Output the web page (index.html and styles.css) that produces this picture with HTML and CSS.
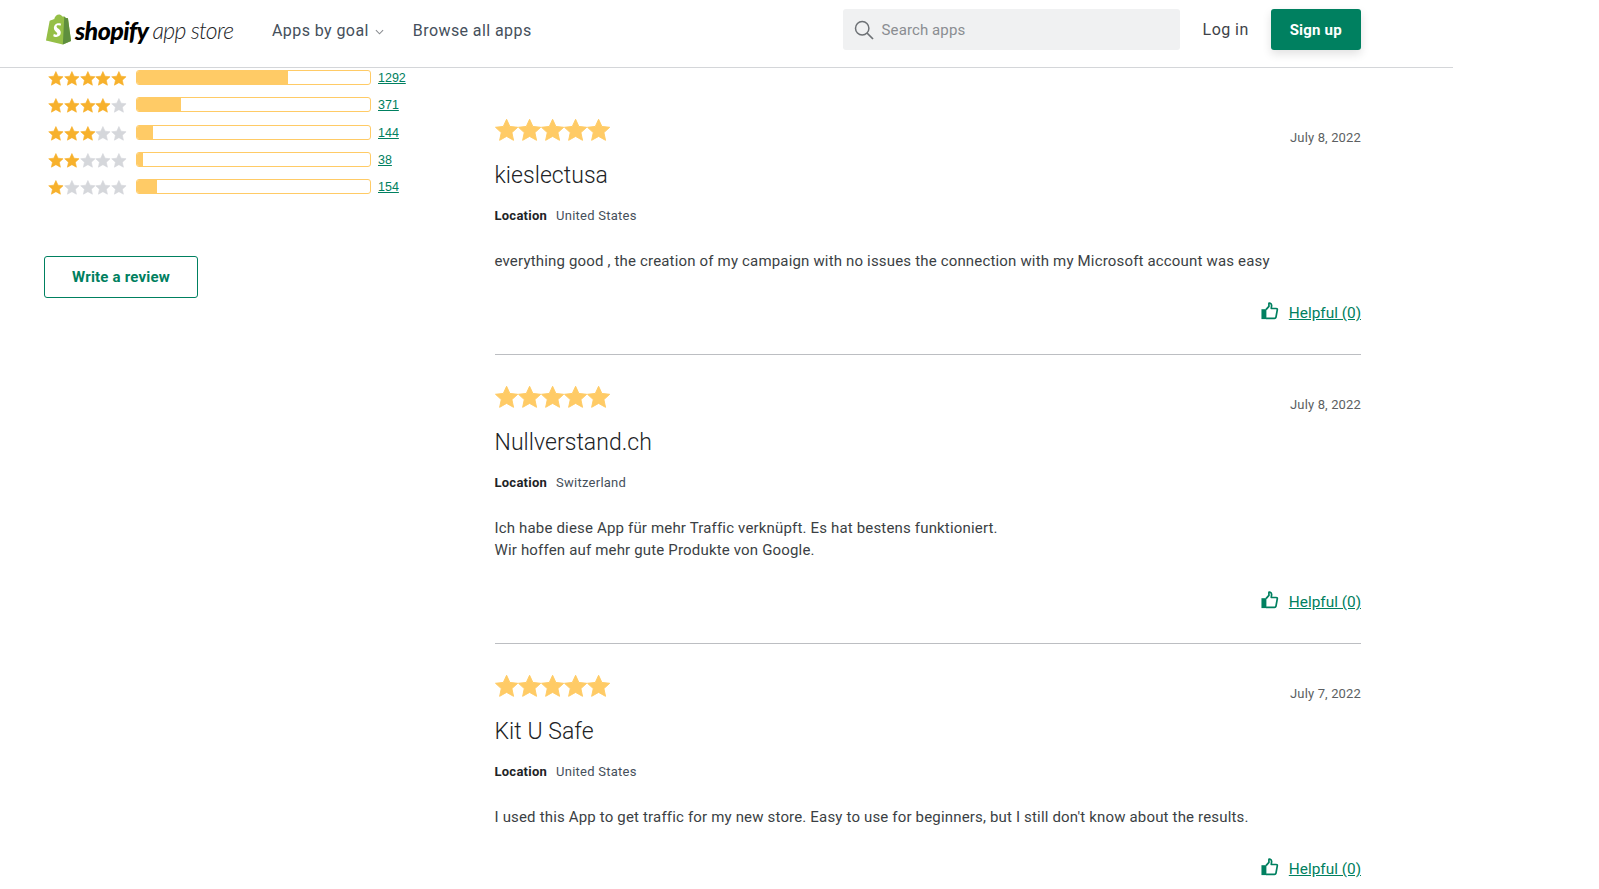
FILE: index.html
```html
<!DOCTYPE html>
<html lang="en">
<head>
<meta charset="utf-8">
<title>Shopify App Store reviews</title>
<link rel="stylesheet" href="styles.css">
</head>
<body>
<svg class="defs" width="0" height="0" aria-hidden="true">
  <symbol id="star" viewBox="0 0 24 24"><path d="M12 .9l3.4 7.4 8.1.9-6 5.5 1.700 8-7.200-4.100-7.200 4.100 1.700-8-6-5.500 8.100-.9z" stroke="currentColor" stroke-width="1" stroke-linejoin="round" fill="currentColor"/></symbol>
  <symbol id="thumb" viewBox="0 0 20 20"><path d="M.5 8h5.500v11H.5z" fill="#008060"/><path d="M5.600 8.500l3.200-3.600V1.600c0-.6 2.800-.6 3 2.100l-.4 3.500h5.400c1 0 1.500.7 1.300 1.600l-1.500 8.200c-.2.800-.7 1.200-1.500 1.200H5.600" fill="none" stroke="#008060" stroke-width="1.900" stroke-linejoin="round"/></symbol>
</svg>
<div class="page">
  <header class="topbar">
    <a class="logo" href="#">
      <svg class="bag" viewBox="0 0 28 32" width="27" height="31"><path d="M1 27.500L4.800 7.200c.2-.7 4-1.600 4.700-1.900C10.300 2.500 12.300.3 15 .5c1.100.1 2.300 1.200 3 2l2 .1 1.600 1.500 2.200.2L27 28l-8.500 3.500z" fill="#95bf47"/><path d="M20 2.600l1.600 1.500 2.200.2L27 28l-8.500 3.500z" fill="#5e8e3e"/><path d="M16 12.200s-1.100-.5-2.300-.5c-2.400 0-1.900 2-.5 3 1.600 1.200 3.300 2.300 3.200 4.700-.1 2.700-2.200 4.300-4.600 4.300-1.600 0-3.300-.8-3.300-.8l.7-2.400s1.200 1 2.400 1c1.200 0 1.500-1.200.7-2.100-1.200-1.400-3.100-2.300-3.100-4.900 0-2.900 2.200-5 5.200-5 1.500 0 2.400.5 2.400.5z" fill="#fff"/></svg>
      <span class="logo-word">shopify</span>
      <span class="logo-sub">app store</span>
    </a>
    <nav class="nav">
      <a class="nav-link" href="#">Apps by goal <svg class="chev" viewBox="0 0 10 6" width="9" height="6"><path d="M1 1l4 4 4-4" fill="none" stroke="#8a8d91" stroke-width="1.200"/></svg></a>
      <a class="nav-link" href="#">Browse all apps</a>
    </nav>
    <div class="search">
      <svg viewBox="0 0 20 20" width="20" height="20"><circle cx="8.200" cy="8.200" r="6.700" fill="none" stroke="#6d7175" stroke-width="1.500"/><path d="M13 13l6 6" stroke="#6d7175" stroke-width="1.700"/></svg>
      <span>Search apps</span>
    </div>
    <a class="login" href="#">Log in</a>
    <a class="signup" href="#">Sign up</a>
  </header>

  <main class="content">
    <aside class="side">
      <div class="rate"><span class="stars small"><svg class="on"><use href="#star"/></svg><svg class="on"><use href="#star"/></svg><svg class="on"><use href="#star"/></svg><svg class="on"><use href="#star"/></svg><svg class="on"><use href="#star"/></svg></span><span class="bar"><span class="fill" style="width:65%"></span></span><a href="#">1292</a></div>
      <div class="rate"><span class="stars small"><svg class="on"><use href="#star"/></svg><svg class="on"><use href="#star"/></svg><svg class="on"><use href="#star"/></svg><svg class="on"><use href="#star"/></svg><svg class="off"><use href="#star"/></svg></span><span class="bar"><span class="fill" style="width:19%"></span></span><a href="#">371</a></div>
      <div class="rate"><span class="stars small"><svg class="on"><use href="#star"/></svg><svg class="on"><use href="#star"/></svg><svg class="on"><use href="#star"/></svg><svg class="off"><use href="#star"/></svg><svg class="off"><use href="#star"/></svg></span><span class="bar"><span class="fill" style="width:7%"></span></span><a href="#">144</a></div>
      <div class="rate"><span class="stars small"><svg class="on"><use href="#star"/></svg><svg class="on"><use href="#star"/></svg><svg class="off"><use href="#star"/></svg><svg class="off"><use href="#star"/></svg><svg class="off"><use href="#star"/></svg></span><span class="bar"><span class="fill" style="width:2.500%"></span></span><a href="#">38</a></div>
      <div class="rate"><span class="stars small"><svg class="on"><use href="#star"/></svg><svg class="off"><use href="#star"/></svg><svg class="off"><use href="#star"/></svg><svg class="off"><use href="#star"/></svg><svg class="off"><use href="#star"/></svg></span><span class="bar"><span class="fill" style="width:8.500%"></span></span><a href="#">154</a></div>
      <a class="write" href="#">Write a review</a>
    </aside>

    <section class="reviews">
      <article class="review">
        <div class="review-top">
          <span class="stars big"><svg><use href="#star"/></svg><svg><use href="#star"/></svg><svg><use href="#star"/></svg><svg><use href="#star"/></svg><svg><use href="#star"/></svg></span>
          <time>July 8, 2022</time>
        </div>
        <h3>kieslectusa</h3>
        <p class="loc"><b>Location</b><span>United States</span></p>
        <p class="text">everything good , the creation of my campaign with no issues the connection with my Microsoft account was easy</p>
        <div class="helpful"><svg width="18" height="18"><use href="#thumb"/></svg><a href="#">Helpful (0)</a></div>
      </article>
      <article class="review">
        <div class="review-top">
          <span class="stars big"><svg><use href="#star"/></svg><svg><use href="#star"/></svg><svg><use href="#star"/></svg><svg><use href="#star"/></svg><svg><use href="#star"/></svg></span>
          <time>July 8, 2022</time>
        </div>
        <h3>Nullverstand.ch</h3>
        <p class="loc"><b>Location</b><span>Switzerland</span></p>
        <p class="text">Ich habe diese App für mehr Traffic verknüpft. Es hat bestens funktioniert.<br>Wir hoffen auf mehr gute Produkte von Google.</p>
        <div class="helpful"><svg width="18" height="18"><use href="#thumb"/></svg><a href="#">Helpful (0)</a></div>
      </article>
      <article class="review">
        <div class="review-top">
          <span class="stars big"><svg><use href="#star"/></svg><svg><use href="#star"/></svg><svg><use href="#star"/></svg><svg><use href="#star"/></svg><svg><use href="#star"/></svg></span>
          <time>July 7, 2022</time>
        </div>
        <h3>Kit U Safe</h3>
        <p class="loc"><b>Location</b><span>United States</span></p>
        <p class="text">I used this App to get traffic for my new store. Easy to use for beginners, but I still don't know about the results.</p>
        <div class="helpful"><svg width="18" height="18"><use href="#thumb"/></svg><a href="#">Helpful (0)</a></div>
      </article>
    </section>
  </main>
</div>
</body>
</html>
```

FILE: styles.css
```css
* { box-sizing: border-box; }
html, body { margin: 0; height: 100%; overflow: hidden; background: #fff; }
body { font-family: Roboto, "Liberation Sans", sans-serif; color: #212326; }
a { color: inherit; text-decoration: none; }
.defs { position: absolute; }
.page { width: 1453px; }

.topbar { height: 68px; border-bottom: 1px solid #d4d6d9; display: flex; align-items: center; padding: 0 92px 8px 45px; }
.logo { display: flex; align-items: center; width: 227px; color: #000; }
.bag { flex: none; margin-right: 3px; }
.logo-word { font: italic 900 25px Lato, sans-serif; letter-spacing: -.6px; }
.logo-sub { font: italic 300 23px Lato, sans-serif; margin-left: 4px; letter-spacing: -.7px; color: #212326; }
.nav { display: flex; gap: 29px; margin-top: 2px; font-size: 16px; color: #454f5b; letter-spacing: .42px; }
.nav-link { display: flex; align-items: center; gap: 6px; }
.chev { margin-top: 2px; }
.search { margin-left: 311px; width: 337px; height: 41px; border-radius: 3px; background: #f0f1f2; display: flex; align-items: center; gap: 8px; padding: 1px 0 0 11px; color: #8a8d91; font-size: 15px; letter-spacing: .1px; }
.login { margin-left: 23px; font-size: 16px; color: #3e4248; letter-spacing: .45px; }
.signup { margin-left: 22px; width: 90px; height: 41px; border-radius: 3px; background: #008060; color: #fff; font-size: 15px; font-weight: 700; letter-spacing: .2px; display: flex; align-items: center; justify-content: center; box-shadow: 0 4px 10px rgba(0,0,0,.12); }

.content { display: flex; align-items: flex-start; padding: 2px 92px 0 44px; }
.side { width: 450.500px; flex: none; display: flex; flex-direction: column; align-items: flex-start; }
.rate { height: 27.250px; display: flex; align-items: flex-start; font-size: 12.500px; }
.rate a { margin-left: 7px; margin-top: 1px; color: #008060; text-decoration: underline; font-family: "Liberation Sans", sans-serif; line-height: 14px; }
.stars { display: flex; }
.stars.small { width: 87px; padding: 1px 0 0 4px; color: #f7b12c; gap: 0; }
.stars.small svg { width: 15.800px; height: 15px; flex: none; }
.stars.small .off { color: #d5d7db; }
.bar { width: 235px; height: 15px; border: 1px solid #ffcb66; border-radius: 3px; background: #fff; overflow: hidden; display: block; margin-left: 5px; }
.fill { display: block; height: 100%; background: #ffcb66; }
.write { margin-top: 50px; width: 154px; height: 42px; border: 1px solid #008060; border-radius: 3px; color: #008060; font-size: 15px; font-weight: 700; letter-spacing: .2px; display: flex; align-items: center; justify-content: center; }

.reviews { width: 866.500px; flex: none; }
.review { padding: 30px 0 30px; border-bottom: 1px solid #bcbec2; }
.review:first-child { padding-top: 48px; }
.review-top { display: flex; justify-content: space-between; align-items: flex-end; height: 24px; }
.stars.big { color: #ffcb66; gap: 0; }
.stars.big svg { width: 23.200px; height: 24px; flex: none; }
time { font-size: 13px; color: #5c5f62; line-height: 16px; margin-bottom: -4px; letter-spacing: .15px; }
h3 { margin: 19px 0 0; font-size: 23px; font-weight: 300; line-height: 30px; color: #212326; letter-spacing: .05px; }
.loc { margin: 17px 0 0; font-size: 13px; line-height: 16px; display: flex; gap: 9px; color: #454f5b; letter-spacing: .25px; }
.loc b { font-weight: 700; color: #212326; }
.text { margin: 26px 0 0; font-size: 15px; line-height: 22px; color: #3b3f44; letter-spacing: .17px; }
.helpful { margin-top: 30px; display: flex; justify-content: flex-end; align-items: center; gap: 10px; font-size: 15.400px; line-height: 22px; }
.helpful a { color: #008060; text-decoration: underline; }
.helpful svg { margin-top: -4px; }
```
